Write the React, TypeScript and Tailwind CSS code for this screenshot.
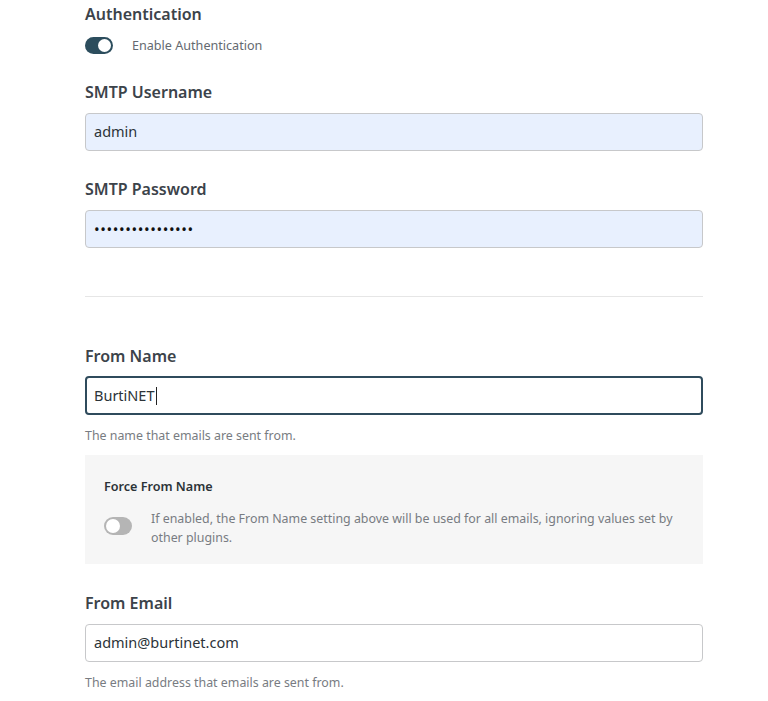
import React from "react";

const font = { fontFamily: '"Noto Sans", "Open Sans", sans-serif' };

function Label({ children, className = "" }: { children: React.ReactNode; className?: string }) {
  return (
    <div className={`h-[24px] text-[16px] leading-[24px] font-semibold text-[#3c434a] ${className}`}>
      {children}
    </div>
  );
}

function Help({ children, className = "" }: { children: React.ReactNode; className?: string }) {
  return <div className={`h-[19px] text-[12.4px] leading-[19px] text-[#787c82] ${className}`}>{children}</div>;
}

export default function App() {
  return (
    <div className="min-h-[701px] w-[768px] bg-white" style={font}>
      <div className="ml-[85px] w-[618px] pb-[20px]">
        <Label className="pt-[2px] h-[26px]">Authentication</Label>
        <div className="mt-[10px] flex h-[18px] items-center">
          <div className="flex h-[17px] w-[28px] items-center justify-end rounded-full bg-[#2c4d5d] pr-[2px]">
            <div className="h-[13px] w-[13px] rounded-full bg-white" />
          </div>
          <span className="ml-[19px] mt-[2px] text-[12.6px] text-[#646970]">Enable Authentication</span>
        </div>

        <Label className="mt-[26px]">SMTP Username</Label>
        <div className="mt-[9px] flex h-[38px] items-center rounded-[4px] border border-[#c7c8ca] bg-[#e8f0fe] px-[8px] text-[14.5px] text-[#2c3338]">
          admin
        </div>

        <Label className="mt-[26px]">SMTP Password</Label>
        <div className="mt-[9px] flex h-[38px] items-center rounded-[4px] border border-[#c7c8ca] bg-[#e8f0fe] px-[8px] text-[15px] tracking-[0.6px] text-[#111]">
          ••••••••••••••••
        </div>

        <div className="mt-[48px] h-px bg-[#e6e6e6]" />

        <Label className="mt-[47px]">From Name</Label>
        <div className="mt-[8px] flex h-[39px] items-center rounded-[4px] border-2 border-[#2f4b5c] bg-white px-[7px] text-[14.5px] text-[#2c3338]">
          BurtiNET
          <span className="ml-[1px] inline-block h-[18px] w-px bg-[#222]" />
        </div>
        <Help className="mt-[11px]">The name that emails are sent from.</Help>

        <div className="mt-[10px] h-[109px] bg-[#f6f6f6] pl-[19px] pr-[20px] pt-[22px]">
          <div className="h-[19px] text-[12.6px] leading-[19px] font-semibold text-[#2c3338]">Force From Name</div>
          <div className="mt-[13px] flex items-start">
            <div className="mt-[8px] flex h-[18px] w-[28px] shrink-0 items-center rounded-full bg-[#b5b5b5] pl-[2px]">
              <div className="h-[14px] w-[14px] rounded-full bg-white" />
            </div>
            <div className="ml-[19px] text-[12.4px] leading-[19px] text-[#787c82]">
              If enabled, the From Name setting above will be used for all emails, ignoring values set by other plugins.
            </div>
          </div>
        </div>

        <Label className="mt-[27px]">From Email</Label>
        <div className="mt-[9px] flex h-[38px] items-center rounded-[4px] border border-[#c7c8ca] bg-white px-[8px] text-[14.5px] text-[#2c3338]">
          admin@burtinet.com
        </div>
        <Help className="mt-[11px]">The email address that emails are sent from.</Help>
      </div>
    </div>
  );
}
